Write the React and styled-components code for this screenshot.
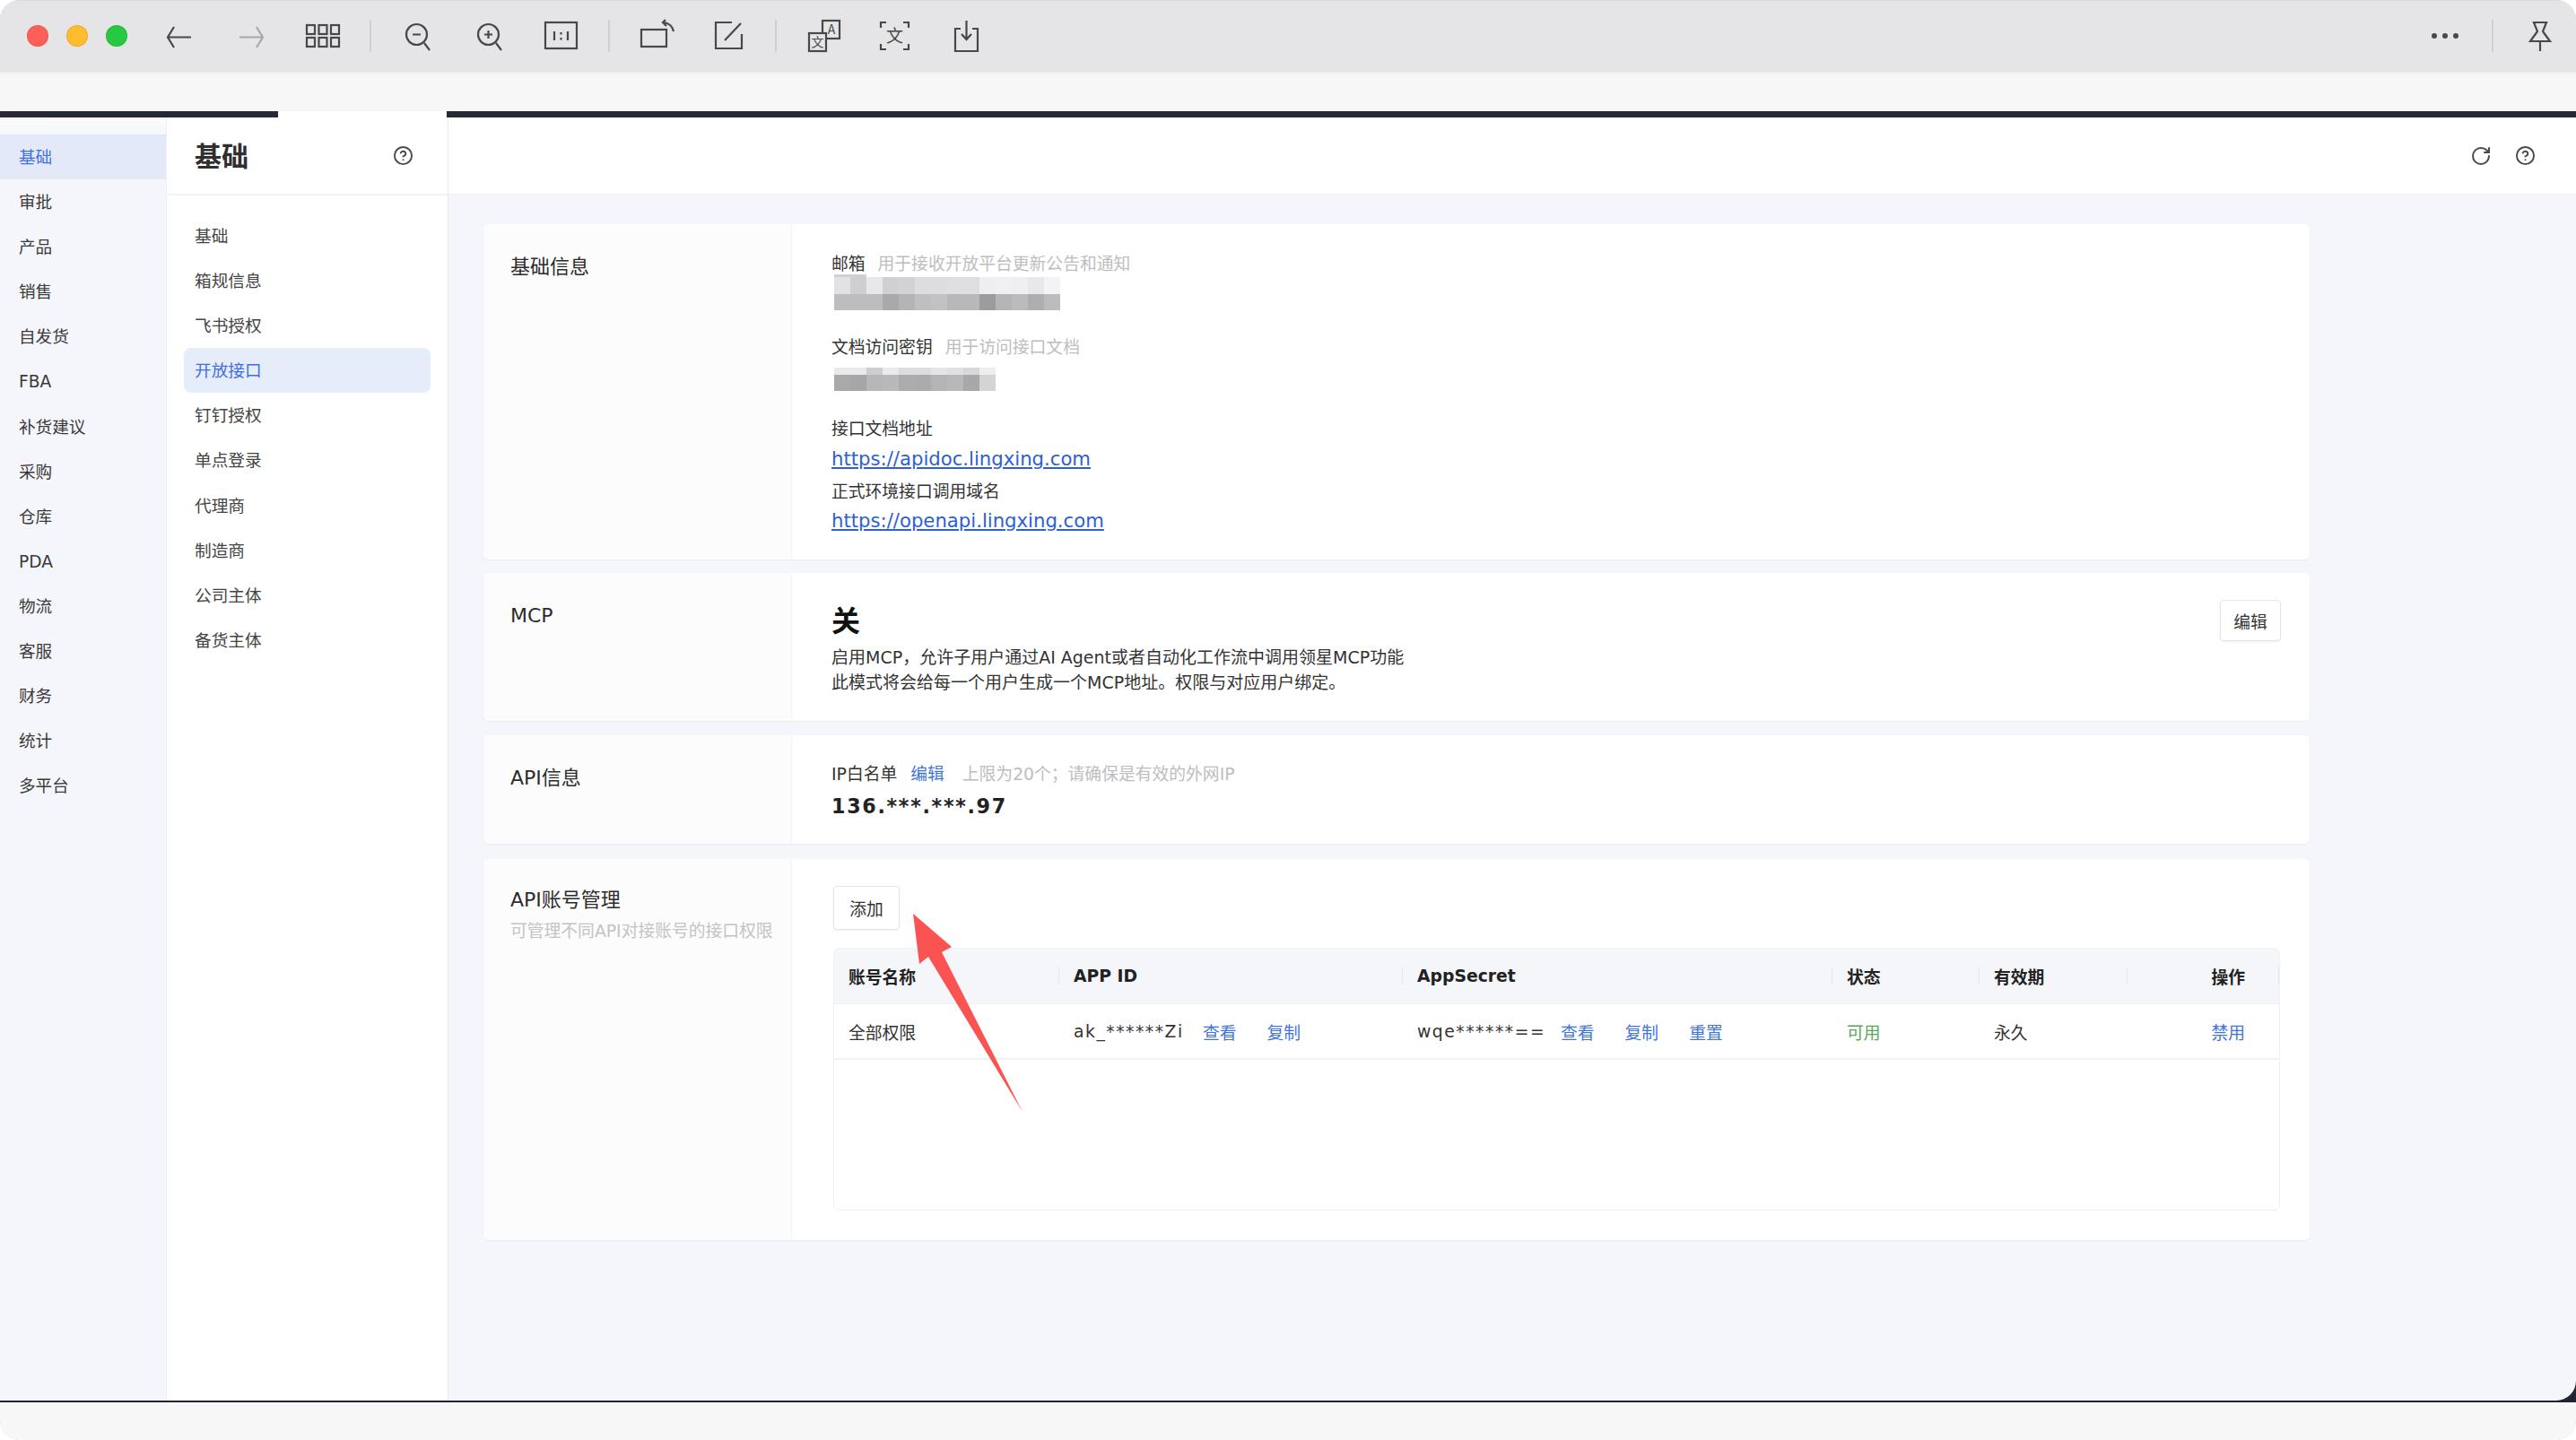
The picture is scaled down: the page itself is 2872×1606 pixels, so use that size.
import React from 'react';
import styled, { createGlobalStyle } from 'styled-components';
import { RotateCw, CircleHelp } from 'lucide-react';

const Global = createGlobalStyle`
  html, body { margin: 0; padding: 0; background: #fff; }
  body { font-family: "DejaVu Sans", "Noto Sans CJK SC", sans-serif; font-size: 18.8px; color: #333; }
  * { box-sizing: border-box; }
`;

const Page = styled.div`
  position: relative; width: 2872px; height: 1606px; display: flex; flex-direction: column;
  overflow: hidden; border-radius: 22px; background: #f7f7f7; box-shadow: inset 0 0 0 1px #d4d4d6;
`;
const TitleBar = styled.header`
  height: 80px; flex: none; display: flex; align-items: center; padding: 0 0 2px 30px;
  background: #e5e5e8; border-top: 1px solid #d8d8da;
`;
const Lights = styled.div`display: flex; gap: 20px; width: 130px; flex: none;`;
const Light = styled.span`
  width: 24px; height: 24px; border-radius: 50%; background: ${p => p.$c}; box-shadow: inset 0 0 0 1px rgba(0,0,0,.08);
`;
const ToolBtn = styled.div`
  width: 80px; height: 40px; flex: none; display: flex; align-items: center; justify-content: center;
  color: ${p => (p.$dim ? '#a8a8aa' : '#48484a')};
  svg { width: 40px; height: 40px; fill: none; stroke: currentColor; stroke-width: 2.2; display: block; }
  text { fill: currentColor; stroke: none; font-family: "Noto Sans CJK SC", sans-serif; text-anchor: middle; font-size: 14px; }
`;
const ToolSep = styled.span`
  width: 2px; height: 36px; background: #cfcfd1; flex: none; margin: 0 ${p => p.$m || 12}px;
`;
const Spacer = styled.div`flex: 1;`;
const SubBar = styled.div`height: 44px; flex: none; background: #f7f7f7; border-top: 2px solid #eeeeef;`;
const Strip = styled.div`height: 7px; flex: none; display: flex; background: #232a35;`;
const StripStart = styled.span`width: 310px; background: linear-gradient(90deg, #2b2739, #232a35 70px);`;
const StripNotch = styled.span`width: 188px; background: #fff;`;
const Frame = styled.div`flex: none; height: 1433px; background: #1f2430; padding-bottom: 2px;`;
const Body = styled.div`
  height: 1431px; display: flex; background: #f4f6fb; border-bottom-right-radius: 22px; overflow: hidden;
`;
const Footer = styled.div`flex: 1; background: #f7f7f7;`;

const Rail = styled.nav`
  width: 186px; flex: none; padding-top: 19px; border-right: 1px solid #eef0f5;
  background: linear-gradient(180deg, #fbfbfd 0, #f4f6fb 24px);
`;
const RailItem = styled.div`
  height: 50.1px; line-height: 51px; padding-left: 21px; font-size: 18.6px;
  color: ${p => (p.$on ? '#3f6fe3' : '#3a3a3a')};
  background: ${p => (p.$on ? '#e4e9fa' : 'transparent')};
`;
const Sub = styled.aside`
  width: 314px; flex: none; background: #fff; border-right: 1px solid #e6e8ee;
`;
const SubHead = styled.div`
  height: 87px; display: flex; align-items: center; justify-content: space-between;
  padding: 0 38px 0 31px; border-bottom: 2px solid #f1f2f5; color: #4a4a4a;
`;
const SubTitle = styled.h1`margin: -3px 0 0; font-size: 30px; font-weight: 700; color: #2f2f2f;`;
const SubMenu = styled.div`padding-top: 20px;`;
const SubItem = styled.div`
  height: 50.1px; line-height: 51px; margin: 0 19px 0 19px; padding-left: 12px; font-size: 18.7px; border-radius: 8px;
  color: ${p => (p.$on ? '#3f6fe3' : '#444')};
  background: ${p => (p.$on ? '#e5edfb' : 'transparent')};
`;
const Main = styled.main`flex: 1; display: flex; flex-direction: column; min-width: 0;`;
const MainHead = styled.div`
  height: 87px; flex: none; background: #fff; border-bottom: 2px solid #f1f2f5;
  display: flex; align-items: center; justify-content: flex-end; gap: 26px; padding-right: 45px; color: #4a4a4a;
`;
const Content = styled.div`
  flex: 1; padding: 32px 0 0 39px; display: flex; flex-direction: column;
`;
const Card = styled.section`
  width: 2036px; height: ${p => p.$h}px; margin-top: ${p => p.$mt || 0}px; flex: none; display: grid; grid-template-columns: 344px 1fr;
  background: #fff; border-radius: 6px; box-shadow: 0 1px 2px rgba(30,40,70,.05);
  overflow: hidden;
`;
const CardSide = styled.div`
  background: #fcfcfd; border-right: 1px solid #f3f4f7; padding: ${p => p.$top || 34}px 0 0 30px;
`;
const CardTitle = styled.h2`margin: 0; font-size: 22px; line-height: 28px; font-weight: 400; color: #2c2c2c;`;
const CardSubtitle = styled.p`margin: 8px 0 0; font-size: 18.8px; line-height: 26px; color: #c3c3c5; white-space: nowrap;`;
const CardBody = styled.div`padding: ${p => p.$top}px 32px 0 44px;`;
const Latin = styled.span`letter-spacing: ${p => p.$ls || 0}px; font-size: ${p => p.$size || 'inherit'};`;
const Line = styled.div`
  display: flex; align-items: center; gap: ${p => p.$gap || 14}px; height: 24px; font-size: 18.8px; line-height: 24px; color: #333;
  margin-top: ${p => p.$mt || 0}px; white-space: nowrap;
`;
const Hint = styled.span`color: #bdbdbf; margin-left: ${p => p.$ml || 0}px;`;
const Mosaic = styled.div`
  display: grid; width: ${p => p.$cols * 18}px; margin: ${p => p.$mt || 0}px 0 0 3px;
  grid-template-columns: repeat(${p => p.$cols}, 18px); grid-auto-rows: ${p => p.$rows};
`;
const DocLink = styled.a`
  display: block; margin-top: ${p => p.$mt}px; font-size: 21.2px; line-height: 30px; color: #2d60d4; text-decoration: underline;
`;
const Row = styled.div`display: flex; justify-content: space-between; align-items: flex-start;`;
const BigState = styled.div`margin-top: 4px; font-size: 32px; line-height: 40px; font-weight: 700; color: #111;`;
const Desc = styled.p`margin: ${p => p.$mt || 0}px 0 0; font-size: 19px; line-height: 27.5px; color: #333; white-space: nowrap;`;
const Btn = styled.button`
  font: inherit; font-size: 18.8px; color: #333; background: #fff; border: 1px solid #e4e4e6; border-radius: 4px;
  width: ${p => p.$w}px; height: ${p => p.$h}px; margin-left: ${p => p.$ml || 0}px; padding: 0; box-shadow: 0 1px 2px rgba(0,0,0,.06); flex: none; display: block;
`;
const Blue = styled.span`color: #3f74e0;`;
const IpValue = styled.div`margin-top: 8px; font-size: 22.2px; line-height: 30px; font-weight: 700; letter-spacing: 1.7px; color: #222;`;
const Table = styled.div`
  width: 1613px; height: 293px; margin-top: 20px; margin-left: 2px; border: 1px solid #f0f1f4; border-radius: 6px; overflow: hidden;
`;
const COLS = '251px 383px 479px 164px 165px 1fr';
const THead = styled.div`display: grid; grid-template-columns: ${COLS}; height: 61px; background: #f5f6f9;`;
const Th = styled.div`
  position: relative; display: flex; align-items: center; padding: 0 ${p => (p.$right ? '38px' : '16px')}; font-weight: 700; font-size: 18.8px; color: #222;
  justify-content: ${p => (p.$right ? 'flex-end' : 'flex-start')};
  &::after { content: ''; position: absolute; right: 0; top: 21px; height: 19px; width: 1px; background: #e4e5ea; }
`;
const TRow = styled.div`display: grid; grid-template-columns: ${COLS}; height: 63px; border-top: 1px solid #f0f1f4; border-bottom: 2px solid #f0f1f4;`;
const Td = styled.div`
  display: flex; align-items: center; gap: 34px; padding: 0 ${p => (p.$right ? '38px' : '16px')}; font-size: 18.8px; white-space: nowrap;
  color: ${p => p.$c || '#333'}; justify-content: ${p => (p.$right ? 'flex-end' : 'flex-start')};
`;
const Secret = styled.span`margin-right: -13px; width: ${p => p.$w}px;`;
const Arrow = styled.svg`position: absolute; left: 1010px; top: 1010px; width: 140px; height: 240px;`;

const ArrowBack = ({ flip }) => (
  <svg viewBox="0 0 40 40" style={flip ? { transform: 'scaleX(-1)' } : undefined}>
    <path d="M14 10 L7 21.5 L14 33 M7 21.5 H33" />
  </svg>
);
const Cell3 = [2, 15.5, 29];
const GridIcon = () => (
  <svg viewBox="0 0 40 40">
    {[8, 22].map(y => Cell3.map(x => <rect key={`${x}-${y}`} x={x} y={y} width="9" height="10" />))}
  </svg>
);
const Magnify = ({ plus }) => (
  <svg viewBox="0 0 40 40">
    <circle cx="18.5" cy="18.5" r="11.5" />
    <path d="M27 28 L33 36 M14 18.5 H23" />
    {plus && <path d="M18.5 14 V23" />}
  </svg>
);
const OneToOne = () => (
  <svg viewBox="0 0 40 40">
    <rect x="2" y="5" width="35" height="29" />
    <path d="M12 15 V25 M27 15 V25 M19.5 16 V18.5 M19.5 22 V24.5" />
  </svg>
);
const RotateIcon = () => (
  <svg viewBox="0 0 40 40">
    <rect x="3" y="13" width="28" height="19" />
    <path d="M39 15 C38 9 33 5 27 5 M30 2 L27 5 L31 9" />
  </svg>
);
const EditIcon = () => (
  <svg viewBox="0 0 40 40">
    <path d="M24 5 H6 V34 H35 V18 M34 6 L16 25" />
  </svg>
);
const TranslateIcon = () => (
  <svg viewBox="0 0 40 40">
    <rect x="19" y="3" width="19" height="20" />
    <rect x="4" y="17" width="19" height="20" fill="#e5e5e8" />
    <text x="29" y="18">A</text>
    <text x="13.5" y="32">文</text>
  </svg>
);
const ScanIcon = () => (
  <svg viewBox="0 0 40 40">
    <path d="M4 11 V5 H10 M29 5 H35 V11 M35 29 V35 H29 M10 35 H4 V29" />
    <text x="19.5" y="27" style={{ fontSize: 19 }}>文</text>
  </svg>
);
const SaveIcon = () => (
  <svg viewBox="0 0 40 40">
    <path d="M13 12 H7 V37 H32 V12 H26 M19.5 3 V24 M14 18 L19.5 24 L25 18" />
  </svg>
);
const Dots = () => (
  <svg viewBox="0 0 40 40">
    <g fill="currentColor" stroke="none">
      <circle cx="8" cy="20" r="3" /><circle cx="20" cy="20" r="3" /><circle cx="32" cy="20" r="3" />
    </g>
  </svg>
);
const Pin = () => (
  <svg viewBox="0 0 40 40">
    <path d="M13 5 H27 L23 15 L31 26 H9 L17 15 Z M20 26 V37" />
  </svg>
);

const rail = ['基础', '审批', '产品', '销售', '自发货', 'FBA', '补货建议', '采购', '仓库', 'PDA', '物流', '客服', '财务', '统计', '多平台'];
const menu = ['基础', '箱规信息', '飞书授权', '开放接口', '钉钉授权', '单点登录', '代理商', '制造商', '公司主体', '备货主体'];
const grey = v => `rgb(${v},${v},${v + 2})`;
const mosaicA = [
  [208, 208, 255, 255, 255, 255, 255, 255, 255, 255, 255, 255, 255, 255],
  [226, 207, 232, 208, 210, 221, 221, 223, 222, 238, 240, 239, 232, 243],
  [189, 189, 189, 169, 180, 191, 194, 184, 184, 156, 181, 187, 174, 188],
];
const mosaicB = [
  [233, 233, 206, 233, 220, 220, 230, 224, 216, 238],
  [169, 166, 183, 185, 172, 171, 180, 184, 168, 212],
];
const MosaicBlock = ({ data, rows, mt }) => (
  <Mosaic $cols={data[0].length} $rows={rows} $mt={mt}>
    {data.flat().map((v, i) => <span key={i} style={{ background: grey(v) }} />)}
  </Mosaic>
);

export default function App() {
  return (
    <>
      <Global />
      <Page>
        <TitleBar>
          <Lights>
            <Light $c="#ff5f57" /><Light $c="#febc2e" /><Light $c="#28c840" />
          </Lights>
          <ToolBtn><ArrowBack /></ToolBtn>
          <ToolBtn $dim><ArrowBack flip /></ToolBtn>
          <ToolBtn><GridIcon /></ToolBtn>
          <ToolSep />
          <ToolBtn><Magnify /></ToolBtn>
          <ToolBtn><Magnify plus /></ToolBtn>
          <ToolBtn><OneToOne /></ToolBtn>
          <ToolSep />
          <ToolBtn><RotateIcon /></ToolBtn>
          <ToolBtn><EditIcon /></ToolBtn>
          <ToolSep />
          <ToolBtn><TranslateIcon /></ToolBtn>
          <ToolBtn><ScanIcon /></ToolBtn>
          <ToolBtn><SaveIcon /></ToolBtn>
          <Spacer />
          <ToolBtn><Dots /></ToolBtn>
          <ToolSep $m={12} />
          <ToolBtn><Pin /></ToolBtn>
        </TitleBar>
        <SubBar />
        <Strip><StripStart /><StripNotch /></Strip>
        <Frame>
          <Body>
            <Rail>
              {rail.map((r, i) => <RailItem key={r} $on={i === 0}>{r}</RailItem>)}
            </Rail>
            <Sub>
              <SubHead>
                <SubTitle>基础</SubTitle>
                <CircleHelp size={23} strokeWidth={2} />
              </SubHead>
              <SubMenu>
                {menu.map((m, i) => <SubItem key={m + i} $on={i === 3}>{m}</SubItem>)}
              </SubMenu>
            </Sub>
            <Main>
              <MainHead>
                <RotateCw size={24} strokeWidth={2} />
                <CircleHelp size={23} strokeWidth={2} />
              </MainHead>
              <Content>
                <Card $h={374}>
                  <CardSide><CardTitle>基础信息</CardTitle></CardSide>
                  <CardBody $top={33}>
                    <Line><span>邮箱</span><Hint>用于接收开放平台更新公告和通知</Hint></Line>
                    <MosaicBlock data={mosaicA} rows="3px 19px 18px" mt={-1} />
                    <Line $mt={30}><span>文档访问密钥</span><Hint>用于访问接口文档</Hint></Line>
                    <MosaicBlock data={mosaicB} rows="8px 18px" mt={10} />
                    <Line $mt={31}>接口文档地址</Line>
                    <DocLink $mt={6} href="#">https://apidoc.lingxing.com</DocLink>
                    <Line $mt={10}>正式环境接口调用域名</Line>
                    <DocLink $mt={5} href="#">https://openapi.lingxing.com</DocLink>
                  </CardBody>
                </Card>
                <Card $h={165} $mt={15}>
                  <CardSide $top={34}><CardTitle><Latin>MCP</Latin></CardTitle></CardSide>
                  <CardBody $top={30}>
                    <Row>
                      <div>
                        <BigState>关</BigState>
                        <Desc $mt={7}>启用<Latin>MCP</Latin>，允许子用户通过<Latin>AI Agent</Latin>或者自动化工作流中调用领星<Latin>MCP</Latin>功能</Desc>
                        <Desc>此模式将会给每一个用户生成一个<Latin>MCP</Latin>地址。权限与对应用户绑定。</Desc>
                      </div>
                      <Btn $w={68} $h={46}>编辑</Btn>
                    </Row>
                  </CardBody>
                </Card>
                <Card $h={121} $mt={16}>
                  <CardSide><CardTitle><Latin>API</Latin>信息</CardTitle></CardSide>
                  <CardBody $top={32}>
                    <Line $gap={15}>
                      <span><Latin>IP</Latin>白名单</span>
                      <Blue>编辑</Blue>
                      <Hint $ml={5}>上限为<Latin>20</Latin>个；请确保是有效的外网<Latin>IP</Latin></Hint>
                    </Line>
                    <IpValue>136.***.***.97</IpValue>
                  </CardBody>
                </Card>
                <Card $h={425} $mt={17}>
                  <CardSide $top={32}>
                    <CardTitle><Latin>API</Latin>账号管理</CardTitle>
                    <CardSubtitle>可管理不同<Latin>API</Latin>对接账号的接口权限</CardSubtitle>
                  </CardSide>
                  <CardBody $top={30}>
                    <Btn $w={74} $h={49} $ml={2}>添加</Btn>
                    <Table>
                      <THead>
                        <Th>账号名称</Th>
                        <Th>APP ID</Th>
                        <Th>AppSecret</Th>
                        <Th>状态</Th>
                        <Th>有效期</Th>
                        <Th $right>操作</Th>
                      </THead>
                      <TRow>
                        <Td>全部权限</Td>
                        <Td>
                          <Secret $w={123}><Latin $ls={1.5}>ak_******Zi</Latin></Secret>
                          <Blue>查看</Blue><Blue>复制</Blue>
                        </Td>
                        <Td>
                          <Secret $w={139}><Latin $ls={1.5}>wqe******==</Latin></Secret>
                          <Blue>查看</Blue><Blue>复制</Blue><Blue>重置</Blue>
                        </Td>
                        <Td $c="#55a85a">可用</Td>
                        <Td>永久</Td>
                        <Td $right><Blue>禁用</Blue></Td>
                      </TRow>
                    </Table>
                  </CardBody>
                </Card>
              </Content>
            </Main>
          </Body>
        </Frame>
        <Footer />
        <Arrow viewBox="0 0 140 240">
          <polygon points="8,9 51,46 40,52 130,230 25,57 15,65" fill="#fb5352" />
        </Arrow>
      </Page>
    </>
  );
}
